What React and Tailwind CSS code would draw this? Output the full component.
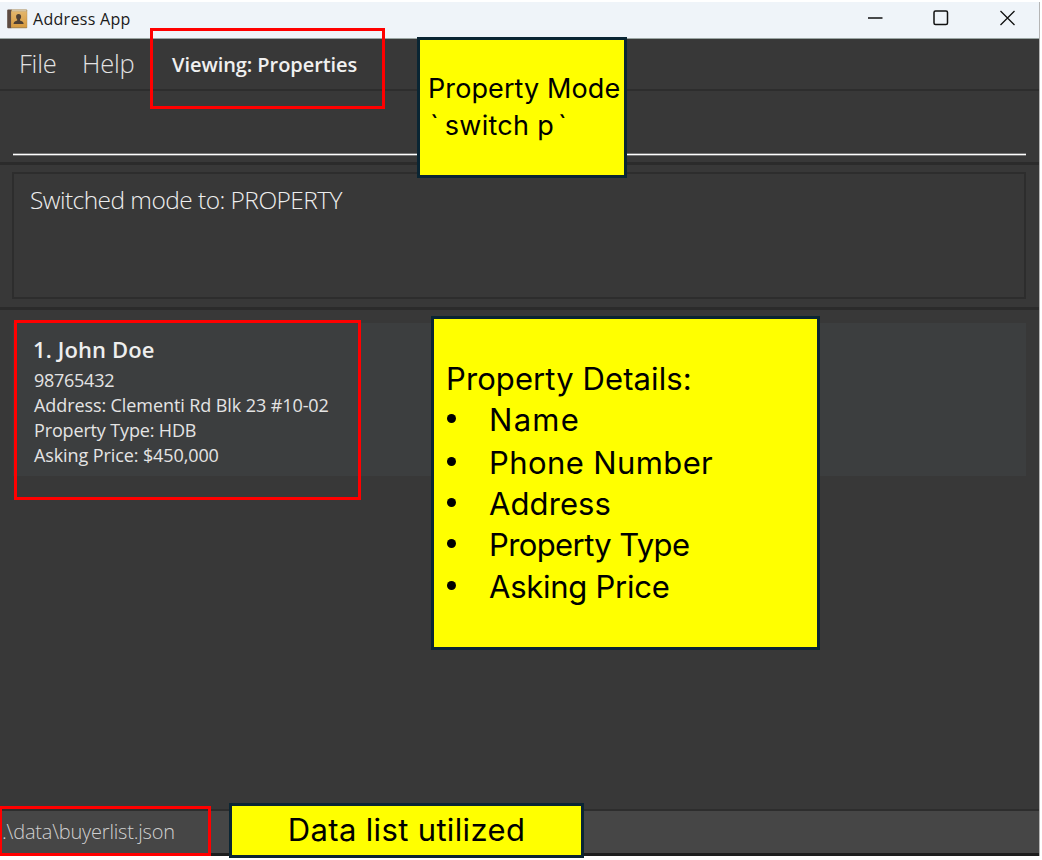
const details = [
  { label: "Name", style: "top-[80px] tracking-[1.3px]" },
  { label: "Phone Number", style: "top-[123px] tracking-[0.4px]" },
  { label: "Address", style: "top-[164px] tracking-[0.1px]" },
  { label: "Property Type", style: "top-[205px] tracking-[-0.6px]" },
  { label: "Asking Price", style: "top-[247px] tracking-[-0.25px]" },
];

function AppIcon() {
  return (
    <svg width="21" height="20" viewBox="0 0 21 20" className="mb-[3px] shrink-0">
      <defs>
        <linearGradient id="cover" x1="0" y1="0" x2="0" y2="1">
          <stop offset="0" stopColor="#e3b66c" />
          <stop offset="1" stopColor="#d69a3f" />
        </linearGradient>
      </defs>
      <rect x="0.2" y="0.5" width="5" height="18.8" rx="1" fill="#5d4b42" />
      <rect x="4" y="0.5" width="16.2" height="18.8" rx="0.8" fill="#a8864f" />
      <rect x="4.2" y="2.4" width="15.6" height="15.8" fill="url(#cover)" />
      <rect x="5" y="1.3" width="14.5" height="1" fill="#e9dcc0" />
      <path
        d="M11.6 4.9c1.7 0 2.7 1.2 2.5 3-.1 1.2-.6 2-1.1 2.5v1.1c1.6.7 3.5 1.1 3.7 3.4H6.5c.2-2.3 2.1-2.7 3.7-3.4v-1.1c-.5-.5-1-1.3-1.1-2.5-.2-1.8.8-3 2.5-3z"
        fill="#4e4034"
      />
    </svg>
  );
}

function TitleBar() {
  return (
    <header className="flex h-[37px] items-center border-b border-[#9aa5a3] bg-[#eff4f9] pl-[7px] pr-[24px]">
      <AppIcon />
      <h1 className="mb-[2px] ml-[5px] flex-1 text-[16px] leading-[34px] tracking-[0.3px] text-[#1a1a1a]">Address App</h1>
      <div className="mb-[4px] flex items-center gap-[50px]">
        <svg width="16" height="16" viewBox="0 0 16 16" stroke="#111" strokeWidth="1.5">
          <path d="M1 8H15.5" />
        </svg>
        <svg width="16" height="16" viewBox="0 0 16 16" fill="none" stroke="#111" strokeWidth="1.5">
          <rect x="1" y="1" width="13.5" height="13.5" rx="1.5" />
        </svg>
        <svg width="16" height="16" viewBox="0 0 16 16" stroke="#111" strokeWidth="1.3">
          <path d="M1.5 1L15.5 15M15.5 1L1.5 15" />
        </svg>
      </div>
    </header>
  );
}

function MenuBar() {
  return (
    <nav className="flex h-[52px] items-center border-b-2 border-[#2d2d2d] pl-[19px] leading-[50px]">
      <span className="w-[63px] pb-[2px] text-[25.5px] font-light tracking-[-0.2px] text-[#e2e2e2]">File</span>
      <span className="w-[90px] pb-[2px] text-[25.5px] font-light tracking-[-0.2px] text-[#e2e2e2]">Help</span>
      <span className="pt-px text-[20px] font-semibold tracking-[-0.06px] text-[#f0f0f0]">Viewing: Properties</span>
    </nav>
  );
}

function PropertyCard() {
  return (
    <article className="mx-[13px] mt-[13px] h-[153px] bg-[#3c3e3f] pl-[21px] pt-[11px] text-[18px] leading-[25px] text-[#e4e4e4]">
      <h2 className="-ml-px mb-[3px] text-[22px] font-semibold leading-[31px] tracking-[0.12px] text-[#eeeeee]">1. John Doe</h2>
      <p className="tracking-[-0.27px]">98765432</p>
      <p className="tracking-[-0.09px]">Address: Clementi Rd Blk 23 #10-02</p>
      <p className="tracking-[-0.15px]">Property Type: HDB</p>
      <p className="tracking-[-0.1px]">Asking Price: $450,000</p>
    </article>
  );
}

function Annotations() {
  return (
    <div className="font-['Inter','Liberation_Sans',sans-serif] text-black">
      <div className="absolute left-[150px] top-[28px] h-[81px] w-[235px] border-[3px] border-[#ff0000]" />
      <div className="absolute left-[14px] top-[320px] h-[180px] w-[347px] border-[3px] border-[#ff0000]" />
      <div className="absolute left-[-1px] top-[806px] h-[50px] w-[212px] border-[3px] border-[#ff0000]" />

      <div className="absolute left-[417px] top-[37px] h-[141px] w-[210px] whitespace-nowrap border-[3px] border-[#0a2533] bg-[#ffff00] pl-[8px] pt-[30px] text-[27px] leading-[37px]">
        <p className="tracking-[0.1px]">Property Mode</p>
        <p className="pl-[2px]">
          <span className="tracking-[6px]">`</span>
          <span className="mr-[4px] tracking-[0.3px]">switch p</span>`
        </p>
      </div>

      <div className="absolute left-[431px] top-[316px] h-[334px] w-[389px] whitespace-nowrap border-[3px] border-[#0a2533] bg-[#ffff00] text-[31px] leading-[42px]">
        <p className="absolute left-[12px] top-[39px] tracking-[0.1px]">Property Details:</p>
        <ul>
          {details.map((d) => (
            <li key={d.label} className={`absolute left-[13px] flex items-center ${d.style}`}>
              <span className="mb-[3px] mr-[33px] size-[9px] rounded-full bg-black" />
              {d.label}
            </li>
          ))}
        </ul>
      </div>

      <div className="absolute left-[229px] top-[803px] h-[55px] w-[355px] border-[3px] border-[#0a2533] bg-[#ffff00] text-center text-[31px] leading-[47px] tracking-[0.35px]">
        Data list utilized
      </div>
    </div>
  );
}

export default function App() {
  return (
    <div className="relative h-[860px] w-[1042px] overflow-hidden bg-white pt-[2px] font-['Open_Sans','Noto_Sans',sans-serif]">
      <div className="flex h-[854px] w-[1039px] flex-col bg-[#383838] shadow-[1px_0_0_#b5b5b5]">
        <TitleBar />
        <MenuBar />
        <div className="h-[74px] border-b-[3px] border-[#2b2b2b] px-[13px] pt-[62px]">
          <div className="h-[3px] border-y border-[#777777] bg-white" />
        </div>
        <div className="h-[145px] border-b-[3px] border-[#2b2b2b] pl-[12px] pr-[13px] pt-[7px]">
          <div className="h-[127px] border-2 border-[#2d2d2d] pl-[16px] pt-[8px] text-[24.5px] font-light leading-[36px] tracking-[-0.55px] text-[#eeeeee]">
            Switched mode to: PROPERTY
          </div>
        </div>
        <main className="flex-1">
          <PropertyCard />
        </main>
        <footer className="h-[47px] border-b-[3px] border-t-2 border-b-[#1d1d1d] border-t-[#2d2d2d] bg-[#464646] pl-[2px] text-[20px] font-light leading-[42px] tracking-[-0.2px] text-[#d0d0d0]">
          .\data\buyerlist.json
        </footer>
      </div>
      <Annotations />
    </div>
  );
}
